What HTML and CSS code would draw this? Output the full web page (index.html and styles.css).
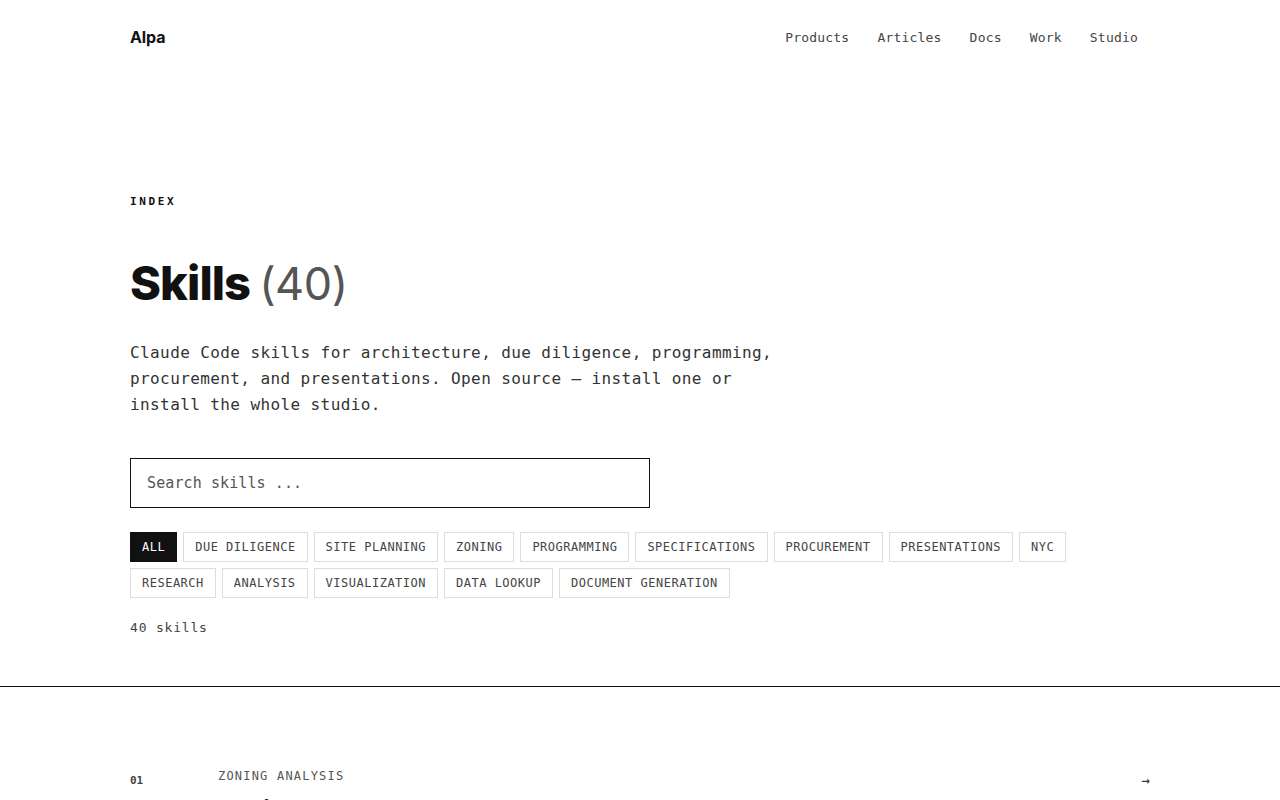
FILE: index.html
```html
<!DOCTYPE html>
<html lang="en">

<head>
    <meta charset="UTF-8">
    <meta name="viewport" content="width=device-width, initial-scale=1.0">
    <title>Skills — Alpa</title>
    <link rel="stylesheet" href="styles.css">
</head>

<body>
    <header class="site-header">
        <div class="wrap header-inner">
            <a class="logo" href="#">Alpa</a>
            <nav class="nav">
                <a href="#">Products</a>
                <a href="#">Articles</a>
                <a href="#">Docs</a>
                <a href="#">Work</a>
                <a href="#">Studio</a>
            </nav>
        </div>
    </header>

    <section class="intro wrap">
        <div class="eyebrow">INDEX</div>
        <h1 class="title">Skills<span class="count">(40)</span></h1>
        <p class="lead">Claude Code skills for architecture, due diligence, programming, procurement, and presentations. Open source — install one or install the whole studio.</p>

        <input class="search" type="text" placeholder="Search skills ...">

        <div class="tags">
            <button class="tag active">ALL</button>
            <button class="tag">DUE DILIGENCE</button>
            <button class="tag">SITE PLANNING</button>
            <button class="tag">ZONING</button>
            <button class="tag">PROGRAMMING</button>
            <button class="tag">SPECIFICATIONS</button>
            <button class="tag">PROCUREMENT</button>
            <button class="tag">PRESENTATIONS</button>
            <button class="tag">NYC</button>
            <button class="tag">RESEARCH</button>
            <button class="tag">ANALYSIS</button>
            <button class="tag">VISUALIZATION</button>
            <button class="tag">DATA LOOKUP</button>
            <button class="tag">DOCUMENT GENERATION</button>
        </div>

        <div class="total">40 skills</div>
    </section>

    <section class="list">
        <div class="wrap">
            <a class="item" href="#">
                <span class="num">01</span>
                <div class="item-body">
                    <div class="item-cat">ZONING ANALYSIS</div>
                    <div class="item-name">zoning-envelope</div>
                </div>
                <span class="arrow">→</span>
            </a>
        </div>
    </section>
</body>

</html>
```

FILE: styles.css
```css
* {
    box-sizing: border-box;
}

body {
    margin: 0;
    background: #fff;
    color: #111;
    font-family: "DejaVu Sans Mono", "Liberation Mono", monospace;
}

a {
    color: inherit;
    text-decoration: none;
}

.wrap {
    width: 1020px;
    margin: 0 auto;
}

/* header */
.header-inner {
    display: flex;
    justify-content: space-between;
    align-items: center;
    height: 74px;
}

.logo {
    font-family: Inter, "Liberation Sans", sans-serif;
    font-weight: 700;
    font-size: 16px;
    letter-spacing: -0.1px;
}

.nav {
    display: flex;
    gap: 28px;
    margin-right: 12px;
}

.nav a {
    font-size: 13px;
    letter-spacing: 0.2px;
    color: #444;
}

/* intro */
.intro {
    padding-top: 121px;
    padding-bottom: 51px;
}

.eyebrow {
    font-size: 11px;
    font-weight: 700;
    letter-spacing: 0.24em;
    line-height: 14px;
}

.title {
    margin: 44px 0 0;
    font-family: Inter, "Liberation Sans", sans-serif;
    font-size: 47px;
    font-weight: 800;
    letter-spacing: -0.02em;
    line-height: 60px;
}

.count {
    margin-left: 9px;
    font-size: 45px;
    font-weight: 400;
    color: #555;
    letter-spacing: -0.01em;
}

.lead {
    width: 660px;
    margin: 26px 0 0;
    font-size: 16px;
    letter-spacing: 0.4px;
    line-height: 26px;
    color: #333;
}

.search {
    display: block;
    width: 520px;
    height: 50px;
    margin-top: 40px;
    padding: 0 16px;
    border: 1px solid #111;
    border-radius: 0;
    font-family: inherit;
    font-size: 15px;
    letter-spacing: 0.1px;
    color: #111;
    outline: none;
}

.search::placeholder {
    color: #555;
}

.tags {
    display: flex;
    flex-wrap: wrap;
    gap: 6px;
    margin-top: 24px;
    width: 960px;
}

.tag {
    height: 30px;
    padding: 0 11px;
    border: 1px solid #ddd;
    background: #fff;
    font-family: inherit;
    font-size: 12px;
    letter-spacing: 0.5px;
    color: #444;
    cursor: pointer;
}

.tag.active {
    background: #111;
    border-color: #111;
    color: #fff;
}

.total {
    margin-top: 22px;
    font-size: 13px;
    letter-spacing: 0.8px;
    color: #444;
}

/* list */
.list {
    border-top: 1px solid #111;
    padding-top: 82px;
}

.item {
    display: flex;
    align-items: flex-start;
}

.num {
    width: 88px;
    font-size: 11px;
    font-weight: 700;
    line-height: 16px;
    color: #444;
    padding-top: 4px;
}

.item-body {
    flex: 1;
}

.item-cat {
    font-size: 12px;
    letter-spacing: 1.2px;
    color: #555;
    line-height: 14px;
}

.item-name {
    margin-top: 12px;
    font-family: Inter, "Liberation Sans", sans-serif;
    font-size: 26px;
    font-weight: 700;
    letter-spacing: -0.02em;
}

.arrow {
    font-size: 14px;
    color: #333;
    padding-top: 3px;
    margin-right: 0;
}
```
